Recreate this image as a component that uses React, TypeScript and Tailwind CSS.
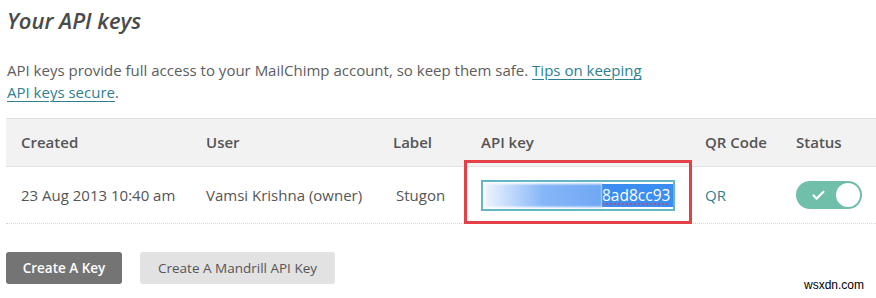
import { Check } from "lucide-react";

const cols = "grid grid-cols-[200px_187px_88px_224px_91px_1fr]";

export default function App() {
  return (
    <div className="relative w-[876px] h-[298px] bg-white overflow-hidden font-['Open_Sans',sans-serif] text-[#5d5d5d]">
      <h2 className="pl-[7px] pt-[4px] text-[22px] leading-[32px] italic font-semibold text-[#4a4a4a]">
        Your API keys
      </h2>

      <p className="mt-[23px] pl-[7px] w-[655px] text-[15px] leading-[22px]">
        API keys provide full access to your MailChimp account, so keep them safe.{" "}
        <a href="#" className="text-[#2f7f8f] underline underline-offset-[3px] decoration-1">
          Tips on keeping API keys secure
        </a>
        .
      </p>

      {/* Table */}
      <div className="relative ml-[6px] mt-[15px] text-[15px]">
        <div className={`${cols} h-[49px] items-center bg-[#f2f2f2] border-t border-[#e2e2e2] border-b font-semibold text-[#555]`}>
          <div className="pl-[15px]">Created</div>
          <div>User</div>
          <div>Label</div>
          <div>API key</div>
          <div>QR Code</div>
          <div>Status</div>
        </div>
        <div className={`${cols} h-[57px] items-center border-b border-dotted border-[#d6d6d6] text-[#555]`}>
          <div className="pl-[15px]">23 Aug 2013 10:40 am</div>
          <div>Vamsi Krishna (owner)</div>
          <div className="pl-[3px]">Stugon</div>
          <div>
            <div className="w-[194px] h-[31px] border-2 border-[#65b6c4] flex items-center px-[2px]">
              <div className="flex h-[23px] items-stretch">
                <span className="w-[117px] bg-gradient-to-r from-[#eef4fe] via-[#86b6f7] to-[#70a8f5] blur-[1px]" />
                <span className="bg-[#3c8df1] text-white text-[15.5px] leading-[23px] pr-[3px] underline decoration-dotted decoration-[#c04a6a] underline-offset-[3px]">
                  8ad8cc93
                </span>
              </div>
            </div>
          </div>
          <div>
            <a href="#" className="text-[#2f7f8f]">QR</a>
          </div>
          <div>
            <div className="w-[66px] h-[28px] rounded-full bg-[#6fbfab] flex items-center justify-between pl-[15px] pr-[2px]">
              <Check className="w-[15px] h-[15px] text-white" strokeWidth={3.5} />
              <span className="w-[24px] h-[24px] rounded-full bg-white" />
            </div>
          </div>
        </div>

        {/* red annotation box */}
        <div className="absolute left-[458px] top-[42px] w-[228px] h-[64px] border-[3px] border-[#e34048] pointer-events-none" />
      </div>

      <div className="flex gap-[18px] ml-[6px] mt-[28px]">
        <button className="h-[32px] w-[116px] rounded-[3px] bg-[#747474] text-white text-[13.5px] font-semibold">
          Create A Key
        </button>
        <button className="h-[32px] w-[195px] rounded-[3px] bg-[#e2e2e2] text-[#555] text-[13.5px]">
          Create A Mandrill API Key
        </button>
      </div>

      <span className="absolute right-[12px] bottom-[4px] font-['Liberation_Sans',Arial,sans-serif] text-[12px] text-black">
        wsxdn.com
      </span>
    </div>
  );
}
